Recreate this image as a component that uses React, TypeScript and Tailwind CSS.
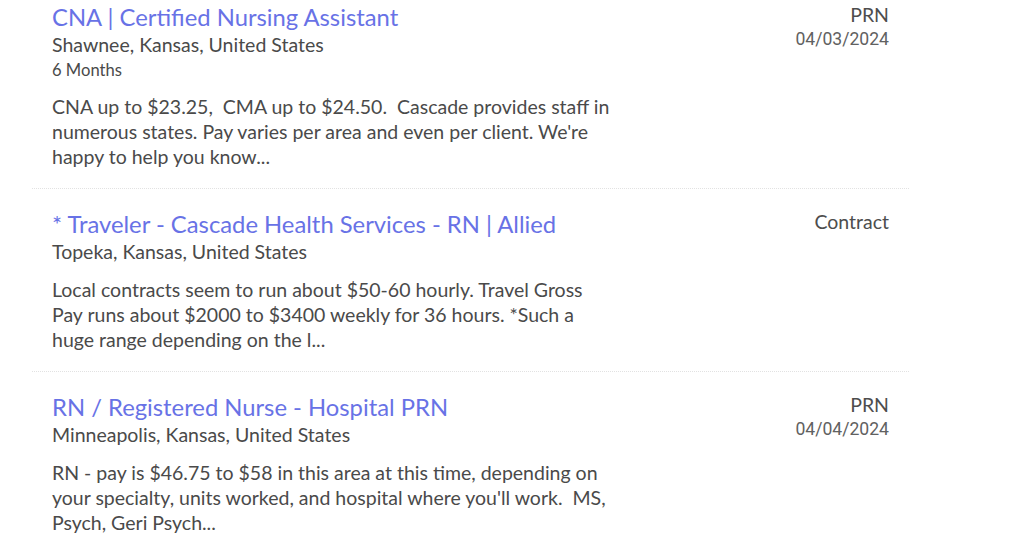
type Job = {
  title: string;
  location: string;
  duration?: string;
  description: string;
  type: string;
  date?: string;
};

const jobs: Job[] = [
  {
    title: 'CNA | Certified Nursing Assistant',
    location: 'Shawnee, Kansas, United States',
    duration: '6 Months',
    description:
      "CNA up to $23.25,\u00a0 CMA up to $24.50.\u00a0 Cascade provides staff in numerous states. Pay varies per area and even per client. We're happy to help you know...",
    type: 'PRN',
    date: '04/03/2024',
  },
  {
    title: '* Traveler - Cascade Health Services - RN | Allied',
    location: 'Topeka, Kansas, United States',
    description:
      'Local contracts seem to run about $50-60 hourly. Travel Gross Pay runs about $2000 to $3400 weekly for 36 hours. *Such a huge range depending on the l...',
    type: 'Contract',
  },
  {
    title: 'RN / Registered Nurse - Hospital PRN',
    location: 'Minneapolis, Kansas, United States',
    description:
      "RN - pay is $46.75 to $58 in this area at this time, depending on your specialty, units worked, and hospital where you'll work.\u00a0 MS, Psych, Geri Psych...",
    type: 'PRN',
    date: '04/04/2024',
  },
];

export default function App() {
  return (
    <div className="min-h-[538px] w-[1024px] overflow-hidden bg-white font-['Lato',sans-serif]">
      <div className="ml-8 w-[877px]">
        {jobs.map((job, i) => (
          <div
            key={job.title}
            className={`flex justify-between px-5 pb-[19px] ${
              i === 0 ? 'pt-[2px]' : 'pt-5'
            } ${i < jobs.length - 1 ? 'border-b border-dotted border-[#e2e2e2]' : ''}`}
          >
            <div className="w-[562px]">
              <a
                href="#"
                className="block text-[23.8px] leading-[30px] text-[#6872e6]"
              >
                {job.title}
              </a>

              <div className="text-[19.5px] leading-[26px] text-[#4a4a4a]">
                {job.location}
              </div>

              {job.duration && (
                <div className="text-[16.6px] leading-[24px] text-[#4a4a4a]">
                  {job.duration}
                </div>
              )}

              <p className="mt-[12px] text-[19.5px] leading-[25px] text-[#4a4a4a]">
                {job.description}
              </p>
            </div>

            <div className="text-right">
              <div className="text-[19.5px] leading-[26px] text-[#4d4d4d]">
                {job.type}
              </div>

              {job.date && (
                <div className="font-['Roboto',sans-serif] text-[17.6px] leading-[22px] text-[#616161]">
                  {job.date}
                </div>
              )}
            </div>
          </div>
        ))}
      </div>
    </div>
  );
}
